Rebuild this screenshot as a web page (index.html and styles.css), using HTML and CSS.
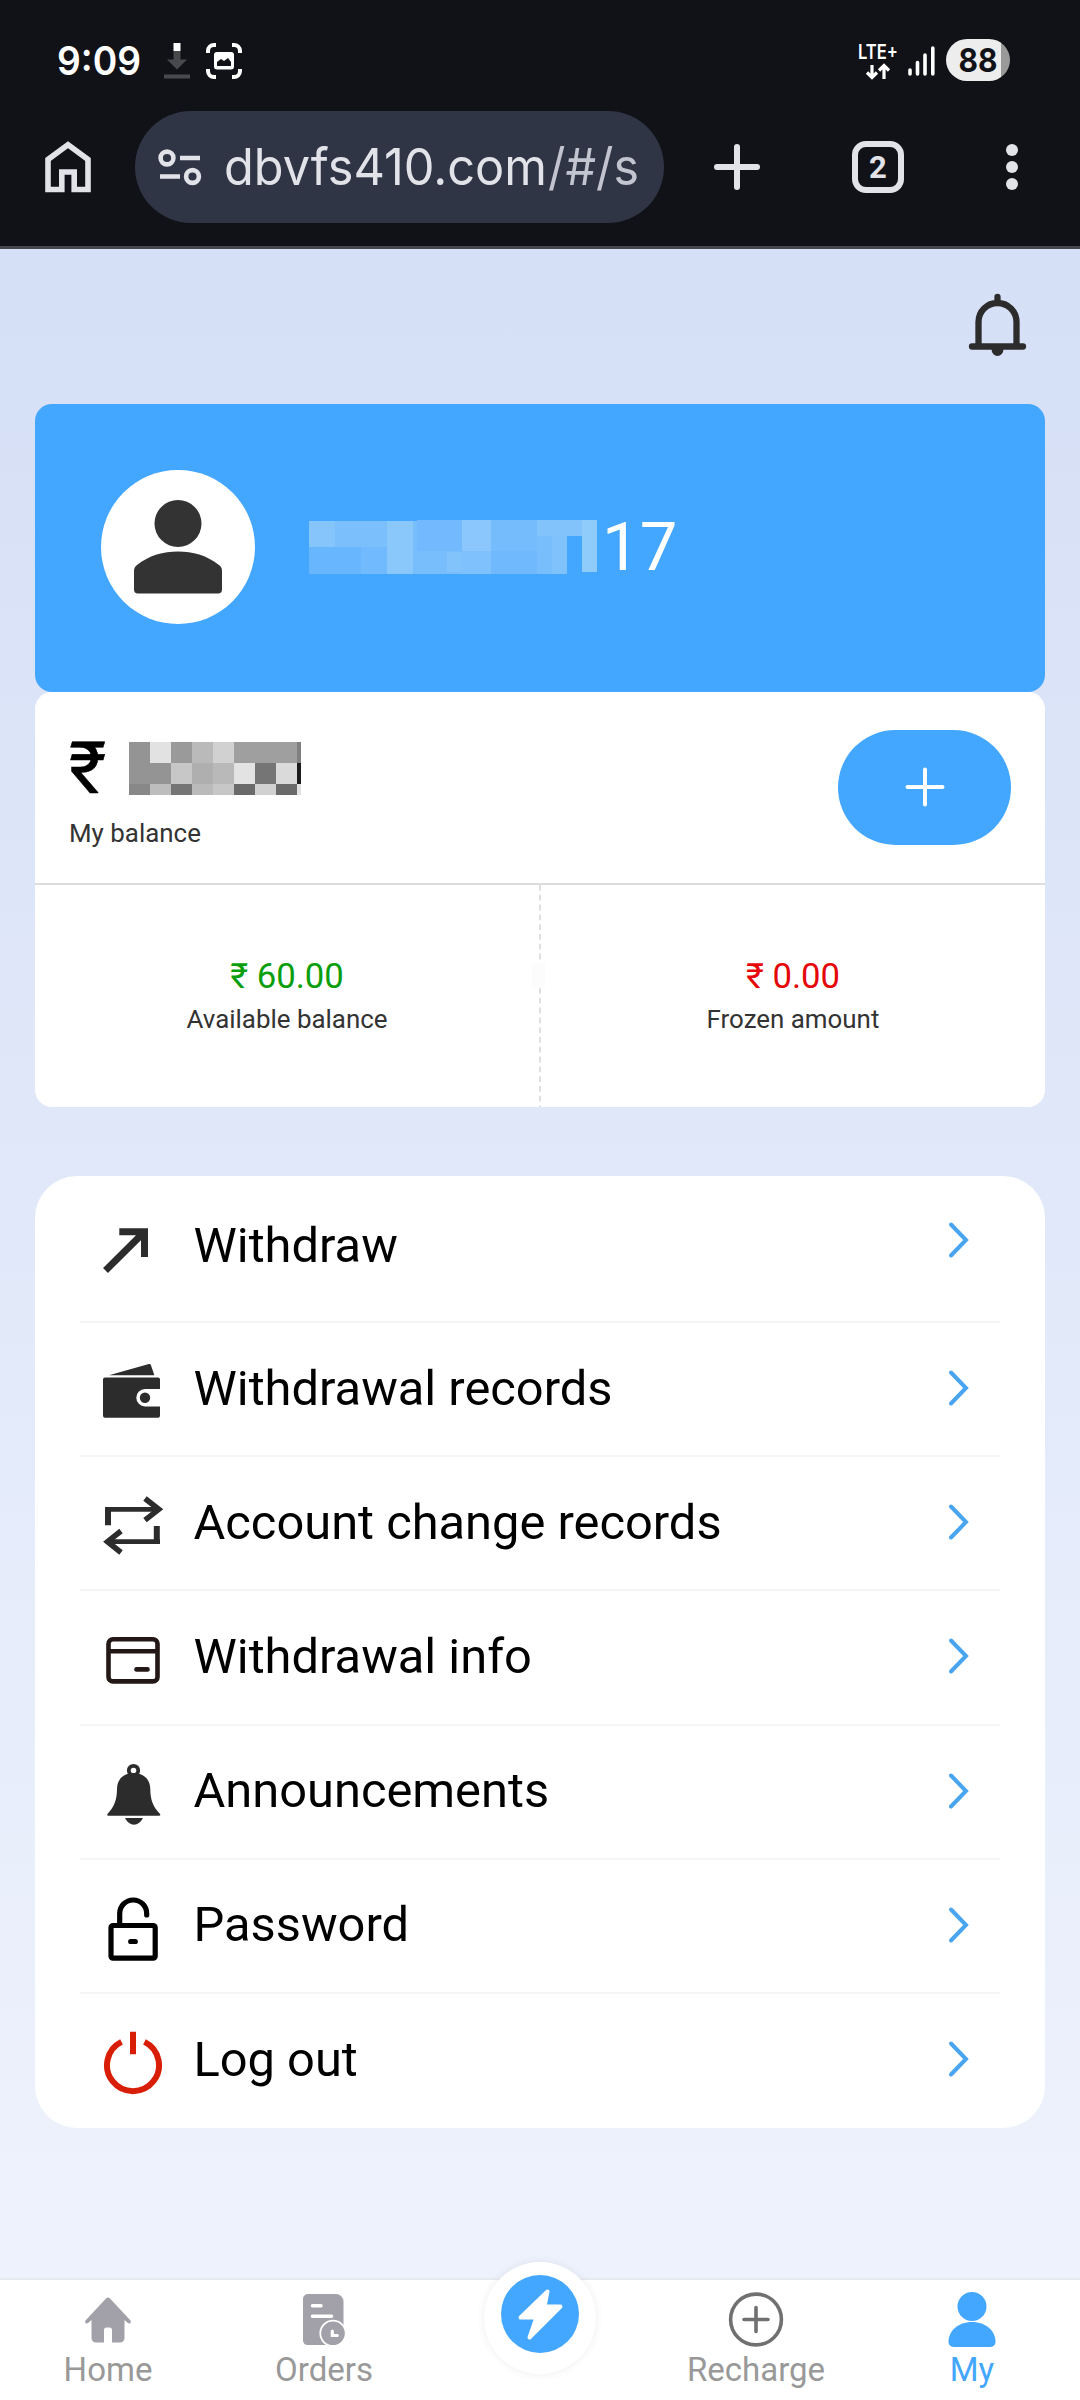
FILE: index.html
```html
<!DOCTYPE html>
<html lang="en">
<head>
<meta charset="utf-8">
<title>My</title>
<link rel="stylesheet" href="styles.css">
</head>
<body>
<header class="chrome">
  <div class="status">
    <svg class="clock" width="84" height="42"><text x="-2" y="35" textLength="84" lengthAdjust="spacingAndGlyphs">9:09</text></svg>
    <svg class="download" width="26" height="36" viewBox="0 0 26 36"><path fill="#fff" d="M9.500 0h7v8h-7z"/><path fill="#48494c" d="M9.500 8h7v8.500H23L13 26.500 3 16.500h6.500zM0 31.500h26v4H0z"/></svg>
    <svg class="capture" width="36" height="36" viewBox="0 0 36 36"><path d="M2 10V8a6 6 0 0 1 6-6h2M26 2h2a6 6 0 0 1 6 6v2M34 26v2a6 6 0 0 1-6 6h-2M10 34H8a6 6 0 0 1-6-6v-2" fill="none" stroke="#fff" stroke-width="4"/><rect x="8" y="9" width="20" height="17.500" rx="3" fill="#fff"/><path d="M11 23v-4l4-3 3 2 4-3 3 4v4z" fill="#111217"/></svg>
    <svg class="lte" width="42" height="40" viewBox="0 0 42 40"><text x="1" y="18" textLength="40" lengthAdjust="spacingAndGlyphs">LTE+</text><path d="M15 24v12M10 31.500l5 5 5-5M27 38V25M22 29.500l5-5 5 5" fill="none" stroke="#fff" stroke-width="3.200"/></svg>
    <svg class="signal" width="28" height="30" viewBox="0 0 28 30"><path d="M2 24v4M9.500 16.500V28M17 9v19M24.800 2v26" fill="none" stroke="#fff" stroke-width="3.600" stroke-linecap="round"/></svg>
    <div class="battery"><svg width="64" height="42"><text x="12.500" y="33" textLength="39" lengthAdjust="spacingAndGlyphs">88</text></svg></div>
  </div>
  <div class="toolbar">
    <svg class="home" width="46" height="52" viewBox="0 0 46 52"><path d="M3 18.500V48.500H16.800V31H29.200V48.500H43V18.500L23 3.800z" fill="none" stroke="#e2e2e9" stroke-width="5.600"/></svg>
    <div class="url">
      <svg class="tune" width="44" height="38" viewBox="0 0 44 38"><g fill="none" stroke="#e2e2e9" stroke-width="4.600"><circle cx="9" cy="10" r="6.400"/><circle cx="34.500" cy="28.500" r="6.400"/><path d="M22 10h20M2 28.500h20"/></g></svg>
      <svg class="address" width="416" height="60"><text x="-2" y="48" textLength="323" lengthAdjust="spacingAndGlyphs">dbvfs410.com</text><text class="path" x="322" y="48" textLength="91" lengthAdjust="spacingAndGlyphs">/#/s</text></svg>
    </div>
    <svg class="newtab" width="46" height="46" viewBox="0 0 46 46"><path d="M23 3v40M3 23h40" stroke="#e2e2e9" stroke-width="6" stroke-linecap="round"/></svg>
    <div class="tabs">2</div>
    <svg class="more" width="12" height="48" viewBox="0 0 12 48" fill="#e2e2e9"><circle cx="6" cy="7" r="6"/><circle cx="6" cy="24" r="6"/><circle cx="6" cy="41" r="6"/></svg>
  </div>
</header>

<main class="page">
  <div class="notice">
    <svg width="57" height="62" viewBox="0 0 57 62"><path d="M28.500 3v5M9.500 52V28a19 19 0 0 1 38 0V52M3 52.500H54" fill="none" stroke="#2c2c2c" stroke-width="6.300" stroke-linecap="round"/><path d="M22.500 55h12a6 7 0 0 1-12 0z" fill="#2c2c2c"/></svg>
  </div>

  <section class="profile">
    <div class="avatar"><svg width="88" height="94" viewBox="0 0 88 94" fill="#333"><circle cx="44" cy="23.500" r="23.500"/><path d="M0 71c0-3 1-4.500 3-6C16 55 29 51.500 44 51.500S72 55 85 65c2 1.500 3 3 3 6v18.500a4 4 0 0 1-4 4H4a4 4 0 0 1-4-4z"/></svg></div>
    <svg class="mask" width="288" height="54" viewBox="0 0 288 54" shape-rendering="crispEdges">
      <path fill="#86c5fc" d="M0 1h26v26H0z"/><path fill="#7bbffc" d="M26 1h52v26H26z"/><path fill="#68b6fd" d="M0 27h52v27H0z"/><path fill="#70bafd" d="M52 27h26v27H52z"/>
      <path fill="#8ac8fb" d="M78 1h26v53H78z"/><path fill="#78bdfc" d="M104 1h49v53h-49z"/><path fill="#72bafd" d="M108 0h45v31h-45z"/><path fill="#82c3fc" d="M138 32h15v20h-15z"/>
      <path fill="#8bc7fc" d="M153 0h29v31h-29z"/><path fill="#7ec1fc" d="M153 31h29v23h-29z"/><path fill="#75bcfc" d="M182 0h46v31h-46z"/><path fill="#70b9fc" d="M182 31h46v23h-46z"/>
      <path fill="#82c3fc" d="M228 0h60v16h-60z"/><path fill="#78befc" d="M228 16h15v38h-15z"/><path fill="#80c2fc" d="M243 16h15v38h-15z"/><path fill="#8fcbfb" d="M273 0h15v52h-15z"/>
    </svg>
    <span class="phone">17</span>
  </section>

  <section class="wallet">
    <div class="balance">
      <div class="total">
        <div class="sum"><span>₹</span>
          <svg width="172" height="53" viewBox="0 0 172 53" shape-rendering="crispEdges">
            <path fill="#949494" d="M0 0h21v42H0z"/><path fill="#888" d="M0 42h21v11H0z"/>
            <path fill="#e2e2e2" d="M21 0h21v21H21z"/><path fill="#949494" d="M21 21h21v21H21z"/><path fill="#bdbdbd" d="M21 42h21v11H21z"/>
            <path fill="#9a9a9a" d="M42 0h21v21H42z"/><path fill="#c7c7c7" d="M42 21h21v21H42z"/><path fill="#757575" d="M42 42h21v11H42z"/>
            <path fill="#bababa" d="M63 0h21v53H63z"/><path fill="#afafaf" d="M63 21h21v21H63z"/>
            <path fill="#d1d1d1" d="M84 0h21v21H84z"/><path fill="#b9b9b9" d="M84 21h21v21H84z"/><path fill="#c7c7c7" d="M84 42h21v11H84z"/>
            <path fill="#9f9f9f" d="M105 0h63v21h-63z"/><path fill="#e3e3e3" d="M105 21h21v21h-21z"/><path fill="#6a6a6a" d="M105 42h21v11h-21z"/>
            <path fill="#757575" d="M126 21h21v21h-21z"/><path fill="#d1d1d1" d="M126 42h21v11h-21z"/>
            <path fill="#dadada" d="M147 21h21v21h-21z"/><path fill="#6a6a6a" d="M147 42h21v11h-21z"/>
            <path fill="#808080" d="M168 0h4v21h-4z"/><path fill="#1c1c1c" d="M168 21h4v21h-4z"/><path fill="#e2e2e2" d="M168 42h4v11h-4z"/>
          </svg>
        </div>
        <div class="label">My balance</div>
      </div>
      <div class="add"><svg width="40" height="40" viewBox="0 0 40 40"><path d="M20 2.500v35M2.500 20h35" stroke="#fff" stroke-width="4" stroke-linecap="round"/></svg></div>
    </div>
    <div class="split">
      <div class="cell"><div class="amount green">₹ 60.00</div><div class="label">Available balance</div></div>
      <svg class="dash" width="2" height="222"><path fill="#fcfcfc" d="M-7 78H6v25H-7z"/><path d="M1 0V76M1 103V222" stroke="#dfdfe1" stroke-width="2" stroke-dasharray="5.800 4"/></svg>
      <div class="cell"><div class="amount red">₹ 0.00</div><div class="label">Frozen amount</div></div>
    </div>
  </section>

  <nav class="menu">
    <div class="row first">
      <svg class="icon" viewBox="0 0 64 64"><path d="M18.300 17.700H43.500V43M43 18.200L4.500 56.500" fill="none" stroke="#2c2c2c" stroke-width="7"/></svg>
      <span>Withdraw</span><svg class="chev" viewBox="0 0 20 36"><path d="M2 2.500L17 18 2 33.500"/></svg>
    </div>
    <div class="row">
      <svg class="icon" viewBox="0 0 64 64" fill="#2c2c2c"><path d="M8 19.300L47 8.300c2-.6 2.700 0 3.200 1.700l3.200 9.300z"/><path d="M4 21.500H57a2 2 0 0 1 2 2V33H44a8.700 8.700 0 0 0 0 17.400H59v9.300a2 2 0 0 1-2 2H4a2 2 0 0 1-2-2V23.500a2 2 0 0 1 2-2z"/><circle cx="44" cy="41.700" r="5.200"/></svg>
      <span>Withdrawal records</span><svg class="chev" viewBox="0 0 20 36"><path d="M2 2.500L17 18 2 33.500"/></svg>
    </div>
    <div class="row">
      <svg class="icon" viewBox="0 0 64 64" fill="none" stroke="#2c2c2c"><path stroke-width="4.800" d="M4 19.300H57M59 51.700H7"/><path stroke-width="6" d="M7 17V35.300M55.800 36V54"/><path stroke-width="5.500" d="M44 8.500L57.800 19.300 44 30.200M20 41L6.500 51.700 20 62.500"/></svg>
      <span>Account change records</span><svg class="chev" viewBox="0 0 20 36"><path d="M2 2.500L17 18 2 33.500"/></svg>
    </div>
    <div class="row">
      <svg class="icon" viewBox="0 0 64 64" fill="none" stroke="#231815" stroke-width="4.600"><rect x="7.500" y="15.200" width="49" height="42.200" rx="4.500"/><path d="M7 27.200H57"/><path stroke-linecap="round" d="M35.500 45.400H46.500"/></svg>
      <span>Withdrawal info</span><svg class="chev" viewBox="0 0 20 36"><path d="M2 2.500L17 18 2 33.500"/></svg>
    </div>
    <div class="row">
      <svg class="icon" viewBox="0 0 64 64" fill="#2c2c2c"><circle cx="32.500" cy="11.500" r="4.700" fill="none" stroke="#2c2c2c" stroke-width="3.800"/><path d="M32.500 14C41 14 49.300 19 49.300 30c0 11 3 18 9.700 25q1 1.800-1 1.800H7.500q-2 0-1-1.800C13 48 16 41 16 30 16 19 24 14 32.500 14zM24 59H42c-4.500 9-13.500 9-18 0z"/></svg>
      <span>Announcements</span><svg class="chev" viewBox="0 0 20 36"><path d="M2 2.500L17 18 2 33.500"/></svg>
    </div>
    <div class="row">
      <svg class="icon" viewBox="0 0 64 64" fill="none" stroke="#000" stroke-width="5.200" stroke-linecap="round"><rect x="10" y="32.500" width="44.200" height="32.700" rx="2"/><path d="M18.700 31V20.500a13.500 13.500 0 0 1 27 0V22M29.700 48.500h4.600"/></svg>
      <span>Password</span><svg class="chev" viewBox="0 0 20 36"><path d="M2 2.500L17 18 2 33.500"/></svg>
    </div>
    <div class="row">
      <svg class="icon" viewBox="0 0 64 64" fill="none" stroke="#d81e06" stroke-width="6"><path d="M20.500 14.900A26 26 0 1 0 43.500 14.900M32 4.800V27.300"/></svg>
      <span>Log out</span><svg class="chev" viewBox="0 0 20 36"><path d="M2 2.500L17 18 2 33.500"/></svg>
    </div>
  </nav>
</main>

<footer class="tabbar">
  <div class="tab"><svg width="56" height="56" viewBox="0 0 56 56"><path d="M26 6.500q2-2 4 0L50.500 28.500q1.200 1.800-.3 2.800-1.200.6-2.600-.6L44.500 28V46a4.500 4.500 0 0 1-4.500 4.500H32V38a2.500 2.500 0 0 0-2.500-2.500h-3A2.500 2.500 0 0 0 24 38V50.500H16a4.500 4.500 0 0 1-4.500-4.500V28L8.400 30.700q-1.400 1.200-2.600.6-1.500-1-.3-2.800z" fill="#a2a0a9"/></svg><span>Home</span></div>
  <div class="tab"><svg width="56" height="56" viewBox="0 0 56 56"><path d="M12 2H40a7.500 7.500 0 0 1 7.500 7.500V53H11.500A4.500 4.500 0 0 1 7 48.500V7a5 5 0 0 1 5-5z" fill="#a2a0a9"/><path d="M16.500 13.800h8.500M16.500 24.300h19" stroke="#fff" stroke-width="3.600" stroke-linecap="round"/><path d="M37 42h14v14H37z" fill="#fff"/><circle cx="37" cy="41.300" r="13.600" fill="#fff"/><circle cx="37" cy="41.300" r="11.800" fill="#a2a0a9"/><path d="M36.300 39v4.500h5" fill="none" stroke="#fff" stroke-width="3.200" stroke-linecap="round"/></svg><span>Orders</span></div>
  <div class="tab"><div class="bolt"><svg width="78" height="78" viewBox="0 0 78 78"><circle cx="39" cy="39" r="39" fill="#43a6ff"/><path d="M46.500 16.500L19.500 42.500H35.500L28.500 62.500 59.500 31.500H43.500z" fill="#fff" stroke="#fff" stroke-width="4" stroke-linejoin="round"/></svg></div></div>
  <div class="tab"><svg width="56" height="56" viewBox="0 0 56 56" fill="none" stroke="#707070" stroke-width="3.600" stroke-linecap="round"><circle cx="28" cy="27.500" r="25.400"/><path d="M28 15.500v24M16 27.500h24"/></svg><span>Recharge</span></div>
  <div class="tab on"><svg width="56" height="56" viewBox="0 0 56 56" fill="#43a6ff"><circle cx="28" cy="14.500" r="14.500"/><path d="M28 30C42 30 51.500 39 51.500 50a5 5 0 0 1-5 5h-37a5 5 0 0 1-5-5C4.500 39 14 30 28 30z"/></svg><span>My</span></div>
</footer>
</body>
</html>
```
FILE: styles.css
```css
* { box-sizing: border-box; }
body { margin: 0; width: 1080px; height: 2400px; overflow: hidden; display: flex; flex-direction: column; font-family: Roboto, "Noto Sans", sans-serif; color: #000; background: #fff; }
svg { display: block; flex: none; overflow: visible; }

.chrome { height: 249px; flex: none; background: #111217; border-bottom: 3px solid #44464e; font-family: Inter, Roboto, sans-serif; }
.status { height: 111px; padding: 11px 70px 0 59px; display: flex; align-items: center; }
.clock text { font-size: 40px; font-weight: 600; fill: #fff; }
.download { margin-left: 21px; }
.capture { margin-left: 16px; }
.lte { margin-left: auto; }
.lte text { font-size: 20px; font-weight: 600; fill: #fff; }
.signal { margin: 0 10px 0 9px; }
.battery { width: 64px; height: 42px; margin-top: -2px; border-radius: 21px; background: linear-gradient(90deg, #ededed 55px, #999 55px); }
.battery text { font-size: 33px; font-weight: 700; fill: #111217; }

.toolbar { height: 112px; padding: 0 62px 0 45px; display: flex; align-items: center; }
.url { width: 529px; height: 112px; margin-left: 44px; padding-left: 23px; border-radius: 56px; background: #303545; display: flex; align-items: center; }
.address { margin-left: 24px; }
.address text { font-size: 51px; fill: #e2e2e9; }
.address .path { fill: #c2c4d0; }
.newtab { margin-left: 50px; }
.tabs { width: 52px; height: 52px; margin-left: 92px; border: 6px solid #e2e2e9; border-radius: 14px; color: #e2e2e9; font: 700 31px/41px Roboto, sans-serif; text-align: center; }
.more { margin-left: auto; }

.page { flex: 1; padding: 45px 35px 0; background: linear-gradient(#d5dff6, #edf2fc 1960px); }
.notice { height: 110px; padding-right: 19px; display: flex; justify-content: flex-end; }

.profile { height: 288px; padding: 0 0 2px 66px; border-radius: 17px; background: #43a6ff; display: flex; align-items: center; }
.avatar { width: 154px; height: 154px; border-radius: 50%; background: #fff; display: flex; align-items: center; justify-content: center; }
.mask { margin-left: 54px; }
.phone { margin-left: 5px; font-size: 67px; line-height: 78px; color: #fff; }

.wallet { height: 415px; border-radius: 17px; background: #fff; }
.balance { height: 193px; padding: 0 34px; border-bottom: 2px solid #dddde0; display: flex; align-items: center; justify-content: space-between; }
.total { padding-top: 14px; }
.sum { display: flex; align-items: center; gap: 23px; height: 53px; }
.sum span { width: 37px; font-size: 72px; line-height: 53px; -webkit-text-stroke: .5px #000; }
.label { font-size: 25.900px; line-height: 30px; color: #333; }
.total .label { margin-top: 23px; }
.add { width: 173px; height: 115px; padding-bottom: 2px; border-radius: 58px; background: #43a6ff; display: flex; align-items: center; justify-content: center; }
.split { height: 222px; display: flex; }
.cell { flex: 1; padding-top: 71px; text-align: center; }
.amount { font-size: 34.700px; line-height: 41px; margin-bottom: 7px; }
.green { color: #0b9e0d; }
.red { color: #e60808; }

.menu { margin-top: 69px; height: 952px; padding: 0 45px; border-radius: 42px; background: #fff; }
.row { height: 134.200px; padding: 0 31px 2px 21px; border-bottom: 2px solid #f5f5f7; display: flex; align-items: center; font-size: 48.800px; }
.row.first { height: 147px; padding-bottom: 6px; }
.row:last-child { border-bottom: 0; padding-bottom: 4px; }
.icon { width: 64px; height: 64px; }
.row span { margin-left: 28.500px; }
.chev { width: 20px; height: 36px; margin-left: auto; }
.first .chev { margin-top: -11px; }
.chev path { fill: none; stroke: #4aa5f0; stroke-width: 4; stroke-linecap: round; }

.tabbar { height: 122px; flex: none; border-top: 2px solid #e6eaf0; background: #fff; display: flex; }
.tab { flex: 1; padding-top: 12px; display: flex; flex-direction: column; align-items: center; color: #999; font-size: 33px; line-height: 38px; }
.tab span { margin-top: 3px; }
.tab.on { color: #43a6ff; }
.bolt { width: 112px; height: 112px; margin-top: -30px; padding-top: 13px; border-radius: 50%; background: #fff; box-shadow: 0 0 10px rgba(0, 0, 0, .07); display: flex; justify-content: center; }
```
